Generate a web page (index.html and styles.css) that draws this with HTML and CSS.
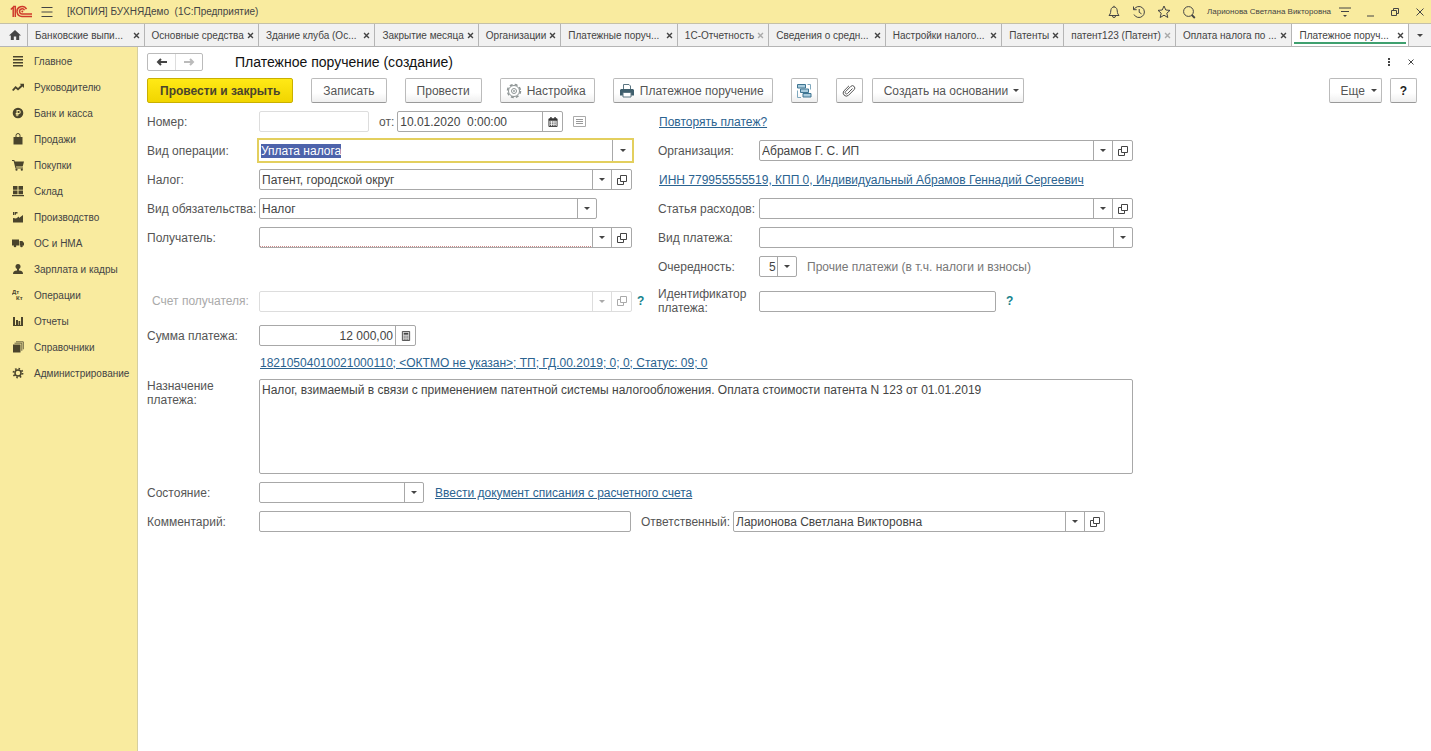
FILE: index.html
```html
<!DOCTYPE html>
<html lang="ru">
<head>
    <meta charset="UTF-8">
    <meta name="viewport" content="width=device-width, initial-scale=1.0">
    <title>Платежное поручение (создание)</title>
    <link rel="stylesheet" href="styles.css">
</head>
<body>
    <!-- shared icons -->
    <svg class="defs" width="0" height="0">
        <symbol id="open" viewBox="0 0 10 10">
            <path d="M3.5 .5h6v6h-6zM3.5 3.5h-3v6h6v-3" fill="none" stroke="currentColor"/>
        </symbol>
        <symbol id="cross" viewBox="0 0 8 8">
            <path d="M1.2 1.2l5.600 5.600M6.800 1.200L1.200 6.800" fill="none" stroke="currentColor" stroke-width="1.6"/>
        </symbol>
        <symbol id="arrow" viewBox="0 0 14 10">
            <path d="M12 5H3M6 2L3 5 6 8" fill="none" stroke="currentColor" stroke-width="2"/>
        </symbol>
    </svg>

    <header class="titlebar">
        <svg class="logo" viewBox="0 0 22 14">
            <g fill="none" stroke="#cf3a2b" stroke-width="1.500">
                <path d="M.8 4.500L3.200 2.300V12M5.300 12V1.500H3.200"/>
                <path d="M16.500 4.200A5 5 0 1 0 12.300 11.500H22"/>
                <path d="M14.500 5.300A2.600 2.600 0 1 0 12.300 9H22"/>
            </g>
            <circle cx="12.300" cy="6.600" r="1" fill="#cf3a2b"/>
        </svg>
        <button class="icon-btn menu-btn" aria-label="Меню">
            <svg viewBox="0 0 14 14"><path d="M1.500 2.500h11M1.500 7h11M1.500 11.500h11"/></svg>
        </button>
        <span class="app-name">[КОПИЯ] БУХНЯДемо&nbsp; (1С:Предприятие)</span>
        <div class="title-tools">
            <button class="icon-btn" aria-label="Уведомления">
                <svg viewBox="0 0 14 14"><path d="M2 10.500c2-2 1.500-4 2-6 .4-1.600 1.500-2.500 3-2.500s2.600.9 3 2.500c.5 2 0 4 2 6zM5.500 11a1.500 1.500 0 0 0 3 0M7 .8V2"/></svg>
            </button>
            <button class="icon-btn" aria-label="История">
                <svg viewBox="0 0 14 14"><path d="M2 4.500A5.500 5.500 0 1 1 2 9.500M1.500 1.500v3.200h3.200M7.200 4v3.300l2.300 1.500"/></svg>
            </button>
            <button class="icon-btn" aria-label="Избранное">
                <svg viewBox="0 0 14 14"><path d="M7 1l1.800 4 4.200.4-3.200 2.800 1 4.300L7 10.200l-3.800 2.300 1-4.300L1 5.400 5.200 5z"/></svg>
            </button>
            <button class="icon-btn" aria-label="Поиск">
                <svg viewBox="0 0 14 14"><circle cx="6.500" cy="6.500" r="4.900"/><path d="M9.800 10l3 3" stroke-width="1.800"/></svg>
            </button>
            <a class="user" href="#">Ларионова Светлана Викторовна</a>
            <button class="icon-btn" aria-label="Настройки окна">
                <svg viewBox="0 0 14 14"><path d="M1 3h12M3 6.500h8"/><path d="M5 10h4l-2 2z" fill="currentColor" stroke="none"/></svg>
            </button>
            <button class="icon-btn" aria-label="Свернуть">
                <svg viewBox="0 0 14 14"><path d="M4 11h7"/></svg>
            </button>
            <button class="icon-btn" aria-label="Развернуть">
                <svg viewBox="0 0 14 14"><path d="M3.500 5.500h5v5h-5zM5.500 5.500v-2h5v5h-2"/></svg>
            </button>
            <button class="icon-btn" aria-label="Закрыть окно">
                <svg viewBox="0 0 14 14"><path d="M3.500 3.500l7 7M10.500 3.500l-7 7"/></svg>
            </button>
        </div>
    </header>

    <nav class="tabs">
        <a class="tab home" href="#" aria-label="Начальная страница">
            <svg viewBox="0 0 12 12"><path d="M6 1L0 6.500h1.800V11h3V7.500h2.400V11h3V6.500H12z" fill="#444"/></svg>
        </a>
        <a class="tab wide" href="#"><span>Банковские выпи...</span><svg class="x"><use href="#cross"/></svg></a>
        <a class="tab" href="#"><span>Основные средства</span><svg class="x"><use href="#cross"/></svg></a>
        <a class="tab wide" href="#"><span>Здание клуба (Ос...</span><svg class="x"><use href="#cross"/></svg></a>
        <a class="tab" href="#"><span>Закрытие месяца</span><svg class="x"><use href="#cross"/></svg></a>
        <a class="tab" href="#"><span>Организации</span><svg class="x"><use href="#cross"/></svg></a>
        <a class="tab wide" href="#"><span>Платежные поруч...</span><svg class="x"><use href="#cross"/></svg></a>
        <a class="tab" href="#"><span>1С-Отчетность</span><svg class="x pale"><use href="#cross"/></svg></a>
        <a class="tab wide" href="#"><span>Сведения о средн...</span><svg class="x"><use href="#cross"/></svg></a>
        <a class="tab wide" href="#"><span>Настройки налого...</span><svg class="x"><use href="#cross"/></svg></a>
        <a class="tab" href="#"><span>Патенты</span><svg class="x"><use href="#cross"/></svg></a>
        <a class="tab" href="#"><span>патент123 (Патент)</span><svg class="x pale"><use href="#cross"/></svg></a>
        <a class="tab wide" href="#"><span>Оплата налога по ...</span><svg class="x"><use href="#cross"/></svg></a>
        <a class="tab wide active" href="#"><span>Платежное поруч...</span><svg class="x"><use href="#cross"/></svg></a>
        <button class="tab-more" aria-label="Все вкладки"><i class="caret"></i></button>
    </nav>

    <div class="main">
        <aside class="sidebar">
            <a href="#"><svg viewBox="0 0 12 12"><path d="M1 1h10v1.500H1zM1 4h10v1.500H1zM1 7h10v1.500H1zM1 10h10v1.500H1z"/></svg>Главное</a>
            <a href="#"><svg viewBox="0 0 12 12"><path d="M0 9l3.500-4 2.500 2 3-3-1.300-1.300H12V7l-1.500-1.500L6 9.500 3.700 7.500 1.500 10z"/></svg>Руководителю</a>
            <a href="#"><svg viewBox="0 0 12 12"><path fill-rule="evenodd" d="M6 .7a5.300 5.300 0 1 0 0 10.600A5.300 5.300 0 0 0 6 .7zM4.500 3h2.300a1.900 1.900 0 0 1 0 3.900H5.600v.6H7v.8H5.600v1H4.500v-1h-.8v-.8h.8v-.6h-.8V6h.8zm1.100 1v2h1.200a1 1 0 0 0 0-2z"/></svg>Банк и касса</a>
            <a href="#"><svg viewBox="0 0 12 12"><path d="M1.500 4h9v7.500h-9z"/><path d="M4 6V2.500a2 2 0 0 1 4 0V6" fill="none" stroke="#4a442c"/></svg>Продажи</a>
            <a href="#"><svg viewBox="0 0 12 12"><path d="M0 1h2.300l.5 1.500H12L10.700 7.500H4l.3 1H11v1H3.500L1.600 2H0z"/><circle cx="4.500" cy="10.700" r="1.100"/><circle cx="9.800" cy="10.700" r="1.100"/></svg>Покупки</a>
            <a href="#"><svg viewBox="0 0 12 12"><path d="M1 1h4.500v3.800H1zM6.500 1H11v3.800H6.500zM1 5.600h4.500v3.600H1zM6.500 5.600H11v3.600H6.500zM0 10h12v1.300H0z"/></svg>Склад</a>
            <a href="#"><svg viewBox="0 0 12 12"><path d="M1 11.500V7l3 .5L7 5.500V7l4-3v7.500zM1 1h1.500v3H1zM3 1h2.500v1.500H4v1.200H3z"/></svg>Производство</a>
            <a href="#"><svg viewBox="0 0 12 12"><path d="M0 2.500h7v6H0zM7.600 4h2.700L12 6v2.500H7.600z"/><circle cx="3" cy="9" r="1.300"/><circle cx="9.500" cy="9" r="1.300"/></svg>ОС и НМА</a>
            <a href="#"><svg viewBox="0 0 12 12"><circle cx="6" cy="3.500" r="2.500"/><path d="M5 5h2v2.500c3 .3 4 1.300 4 3.500H1c0-2.200 1-3.200 4-3.500z"/></svg>Зарплата и кадры</a>
            <a href="#"><svg viewBox="0 0 12 12"><g class="dtkt"><text x="0" y="5">Дт</text><text x="4" y="11">Кт</text></g></svg>Операции</a>
            <a href="#"><svg viewBox="0 0 12 12"><path d="M1 2h2v8H1zM4 5h2v5H4zM6.500 6h1.700v4H6.500zM9 2h2v8H9zM1 10h10v1H1z"/></svg>Отчеты</a>
            <a href="#"><svg viewBox="0 0 12 12"><path d="M1 3.500h7.500v8H1z"/><path d="M2.500 2.200h7.300v7.600M4 .8h7.300v7.500" fill="none" stroke="#4a442c" stroke-width=".8"/></svg>Справочники</a>
            <a href="#"><svg viewBox="0 0 12 12"><g fill="none" stroke="#4a442c"><circle cx="6" cy="6" r="3" stroke-width="1.500"/><circle cx="6" cy="6" r="4.500" stroke-width="1.800" stroke-dasharray="1.530 2" /></g></svg>Администрирование</a>
        </aside>

        <main class="content">
            <div class="page-head">
                <div class="history">
                    <button aria-label="Назад"><svg><use href="#arrow"/></svg></button>
                    <button class="forward" aria-label="Вперед"><svg><use href="#arrow"/></svg></button>
                </div>
                <h1>Платежное поручение (создание)</h1>
                <button class="icon-btn small" aria-label="Дополнительно">
                    <svg viewBox="0 0 8 8"><path d="M3 0h2v2H3zM3 3h2v2H3zM3 6h2v2H3z" fill="currentColor" stroke="none"/></svg>
                </button>
                <button class="icon-btn small" aria-label="Закрыть">
                    <svg viewBox="0 0 8 8"><path d="M1.500 1.500l5 5M6.500 1.500l-5 5"/></svg>
                </button>
            </div>

            <div class="toolbar">
                <button class="btn primary">Провести и закрыть</button>
                <button class="btn">Записать</button>
                <button class="btn">Провести</button>
                <button class="btn with-icon">
                    <svg viewBox="0 0 16 16"><g fill="none" stroke="#8d9494"><circle cx="8" cy="8" r="5.500"/><circle cx="8" cy="8" r="6.500" stroke-width="1.500" stroke-dasharray="2.900 2.200"/><circle cx="8" cy="8" r="2.500"/><circle cx="8" cy="8" r=".6"/></g></svg>
                    Настройка
                </button>
                <button class="btn with-icon">
                    <svg viewBox="0 0 16 16"><path d="M4.500 6V1.500h5.500l1.500 1.500V6" fill="#fff" stroke="#5c7682"/><path d="M2 6h12l1 1v5.500H1V7z" fill="#3f5f6d"/><path d="M4 9.500h8v4.500H4z" fill="#fff" stroke="#5c7682"/></svg>
                    Платежное поручение
                </button>
                <button class="btn square" aria-label="Структура подчиненности">
                    <svg viewBox="0 0 16 16"><g fill="#a9cbdc" stroke="#3e7592"><path d="M1.500 1.500h8v3.500h-8zM4.500 6h8v3.500h-8zM7 10.500h8V14H7z"/><path d="M1.500 7.500v7H5M11.500 1.500h3v5" fill="none" stroke="#7fa9bf"/></g></svg>
                </button>
                <button class="btn square" aria-label="Присоединенные файлы">
                    <svg viewBox="0 0 16 16"><path d="M11.500 5.500l-5 5a1.300 1.300 0 0 1-1.900-1.900l5.200-5.200a2.300 2.300 0 0 1 3.300 3.300l-5.700 5.700a3.200 3.200 0 0 1-4.500-4.500L8 2.800" fill="none" stroke="#555"/></svg>
                </button>
                <button class="btn create">Создать на основании <i class="caret"></i></button>
                <button class="btn more">Еще <i class="caret"></i></button>
                <button class="btn square help-btn">?</button>
            </div>

            <form class="form">
                <div class="left">
                    <label for="number">Номер:</label>
                    <div class="line">
                        <input class="field number" id="number" type="text" disabled>
                        <label for="date">от:</label>
                        <div class="field date">
                            <input id="date" type="text" value="10.01.2020  0:00:00">
                            <button type="button" aria-label="Календарь">
                                <svg viewBox="0 0 11 11"><path d="M1 2h9v8.500H1z" fill="none" stroke="#333"/><path d="M1 2h9v2H1zM2.500 0h1.500v2H2.500zM7 0h1.500v2H7z" fill="#333"/><path d="M2 5.500h7M2 7.500h7M2 9.300h7" stroke="#333" stroke-dasharray="1.500 1"/></svg>
                            </button>
                        </div>
                        <svg class="list-icon" viewBox="0 0 13 11"><path d="M.5 .5h12v10h-12z" fill="none" stroke="#aaa"/><path d="M3 3.500h7M3 5.500h7M3 7.500h7" stroke="#999"/></svg>
                    </div>
                </div>
                <div class="right"><a class="link" href="#">Повторять платеж?</a></div>

                <div class="left">
                    <label for="operation">Вид операции:</label>
                    <div class="field focused">
                        <input id="operation" type="text" role="combobox" aria-expanded="false" value="Уплата налога" autofocus>
                        <button type="button" aria-label="Выбрать"><i class="caret"></i></button>
                    </div>
                </div>
                <div class="right">
                    <label for="org">Организация:</label>
                    <div class="field">
                        <span class="select"><select id="org"><option>Абрамов Г. С. ИП</option></select></span>
                        <button type="button" aria-label="Открыть"><svg><use href="#open"/></svg></button>
                    </div>
                </div>

                <div class="left">
                    <label for="tax">Налог:</label>
                    <div class="field">
                        <span class="select"><select id="tax"><option>Патент, городской округ</option></select></span>
                        <button type="button" aria-label="Открыть"><svg><use href="#open"/></svg></button>
                    </div>
                </div>
                <div class="right"><a class="link" href="#">ИНН 779955555519, КПП 0, Индивидуальный Абрамов Геннадий Сергеевич</a></div>

                <div class="left">
                    <label for="duty">Вид обязательства:</label>
                    <div class="field duty">
                        <span class="select"><select id="duty"><option>Налог</option></select></span>
                    </div>
                </div>
                <div class="right">
                    <label for="expense">Статья расходов:</label>
                    <div class="field">
                        <span class="select"><select id="expense"><option></option></select></span>
                        <button type="button" aria-label="Открыть"><svg><use href="#open"/></svg></button>
                    </div>
                </div>

                <div class="left">
                    <label for="payee">Получатель:</label>
                    <div class="field">
                        <span class="select"><select class="required" id="payee"><option></option></select></span>
                        <button type="button" aria-label="Открыть"><svg><use href="#open"/></svg></button>
                    </div>
                </div>
                <div class="right">
                    <label for="kind">Вид платежа:</label>
                    <div class="field">
                        <span class="select"><select id="kind"><option></option></select></span>
                    </div>
                </div>

                <div class="left"></div>
                <div class="right">
                    <label for="priority">Очередность:</label>
                    <div class="line">
                        <div class="field priority">
                            <span class="select"><select id="priority"><option>5</option></select></span>
                        </div>
                        <span class="hint">Прочие платежи (в т.ч. налоги и взносы)</span>
                    </div>
                </div>

                <div class="left tall disabled">
                    <label for="account">Счет получателя:</label>
                    <div class="field">
                        <span class="select"><select id="account" disabled><option></option></select></span>
                        <button type="button" aria-label="Открыть" disabled><svg><use href="#open"/></svg></button>
                    </div>
                    <a class="help" href="#">?</a>
                </div>
                <div class="right tall">
                    <label for="ident">Идентификатор платежа:</label>
                    <div class="line">
                        <input class="field ident" id="ident" type="text">
                        <a class="help" href="#">?</a>
                    </div>
                </div>

                <div class="left">
                    <label for="sum">Сумма платежа:</label>
                    <div class="field sum">
                        <input id="sum" type="text" value="12 000,00">
                        <button type="button" aria-label="Калькулятор">
                            <svg viewBox="0 0 11 11"><path d="M1.500 .5h8v10h-8z" fill="#ddd" stroke="#444"/><path d="M3 2h5v2H3z" fill="#444"/><path d="M3 5.700h5M3 7.500h5M3 9.200h5" stroke="#444" stroke-dasharray="1 1"/></svg>
                        </button>
                    </div>
                </div>
                <div class="right"></div>

                <div class="full kbk">
                    <a class="link" href="#">18210504010021000110; &lt;ОКТМО не указан&gt;; ТП; ГД.00.2019; 0; 0; Статус: 09; 0</a>
                </div>

                <div class="full purpose">
                    <label for="purpose">Назначение платежа:</label>
                    <textarea class="field" id="purpose">Налог, взимаемый в связи с применением патентной системы налогообложения. Оплата стоимости патента N 123 от 01.01.2019</textarea>
                </div>

                <div class="full">
                    <label for="state">Состояние:</label>
                    <div class="line">
                        <div class="field state">
                            <span class="select"><select id="state"><option></option></select></span>
                        </div>
                        <a class="link" href="#">Ввести документ списания с расчетного счета</a>
                    </div>
                </div>

                <div class="full">
                    <label for="comment">Комментарий:</label>
                    <div class="line last">
                        <input class="field" id="comment" type="text">
                        <label for="author">Ответственный:</label>
                        <div class="field">
                            <span class="select"><select id="author"><option>Ларионова Светлана Викторовна</option></select></span>
                            <button type="button" aria-label="Открыть"><svg><use href="#open"/></svg></button>
                        </div>
                    </div>
                </div>
            </form>
        </main>
    </div>

    <script>
        const operation = document.getElementById('operation');
        operation.focus();
        operation.select();
    </script>
</body>
</html>
```
FILE: styles.css
```css
* {
    box-sizing: border-box;
}

body {
    margin: 0;
    min-height: 100vh;
    display: flex;
    flex-direction: column;
    font-family: "Liberation Sans", Arial, sans-serif;
    font-size: 12px;
    color: #444;
    background: #fff;
}

button, input, select, textarea {
    font: inherit;
    color: inherit;
    margin: 0;
    padding: 0;
    border: none;
    background: none;
    outline: none;
}

button {
    cursor: pointer;
}

a {
    color: inherit;
    text-decoration: none;
}

svg {
    flex: none;
}

.defs {
    position: absolute;
}

.caret {
    display: inline-block;
    border: 3px solid transparent;
    border-top-color: #444;
    border-bottom: none;
}

/* title bar */
.titlebar {
    display: flex;
    align-items: center;
    height: 23px;
    padding: 0 4px 0 10px;
    background: #f9eb9f;
    font-size: 10px;
}

.logo {
    width: 22px;
    height: 14px;
}

.icon-btn {
    display: flex;
}

.icon-btn svg {
    width: 14px;
    height: 14px;
    fill: none;
    stroke: currentColor;
}

.menu-btn {
    margin: 0 13px 0 8px;
}

.title-tools {
    display: flex;
    align-items: center;
    gap: 11px;
    margin-left: auto;
}

.user {
    font-size: 8px;
    margin-right: -4px;
}

/* tabs */
.tabs {
    display: flex;
    height: 24px;
    background: #f1f1f1;
    border-top: 1px solid #c4c0a8;
    border-bottom: 1px solid #b5b5b5;
    font-size: 10px;
}

.tab {
    display: flex;
    align-items: center;
    justify-content: space-between;
    gap: 3px;
    padding: 0 4px 0 7px;
    border-right: 1px solid #b5b5b5;
    white-space: nowrap;
}

.home {
    flex: none;
    width: 28px;
    justify-content: center;
}

.home svg {
    width: 12px;
    height: 12px;
}

.wide {
    width: 117px;
}

.active {
    background: linear-gradient(#3fa06f, #3fa06f) center bottom 2px / calc(100% - 4px) 2px no-repeat #fff;
}

.tab .x {
    width: 7px;
    height: 7px;
}

.pale {
    color: #aaa;
}

.tab-more {
    flex: none;
    width: 22px;
    display: flex;
    align-items: center;
    justify-content: center;
}

/* sidebar */
.main {
    flex: 1;
    display: flex;
}

.sidebar {
    width: 138px;
    flex: none;
    padding-top: 1px;
    background: #f9eb9f;
    border-right: 1px solid #d6cf9f;
    font-size: 10px;
}

.sidebar a {
    display: flex;
    align-items: center;
    gap: 10px;
    height: 26px;
    padding-left: 12px;
}

.sidebar svg {
    width: 12px;
    height: 12px;
    fill: #4a442c;
}

.dtkt {
    font-size: 6px;
    font-weight: bold;
}

/* page */
.content {
    flex: 1;
    min-width: 0;
    padding: 6px 14px 20px 9px;
}

.page-head {
    display: flex;
    align-items: center;
    height: 18px;
    margin-bottom: 7px;
    padding-right: 2px;
}

.history {
    display: flex;
    height: 18px;
    border: 1px solid #bbb;
    border-radius: 2px;
}

.history button {
    width: 27px;
    display: flex;
    align-items: center;
    justify-content: center;
}

.history svg {
    width: 14px;
    height: 10px;
}

.history .forward {
    color: #bbb;
    border-left: 1px solid #ddd;
}

.forward svg {
    transform: scaleX(-1);
}

h1 {
    flex: 1;
    margin: 0 0 0 32px;
    font-size: 14px;
    font-weight: normal;
    color: #111;
}

.small {
    margin-left: 14px;
}

.small svg {
    width: 8px;
    height: 8px;
}

.toolbar {
    display: flex;
    gap: 18px;
    margin-bottom: 8px;
}

.btn {
    display: flex;
    align-items: center;
    justify-content: center;
    height: 25px;
    padding: 0 11px;
    border: 1px solid #bbb;
    border-bottom-color: #999;
    border-radius: 2px;
    background: linear-gradient(#fff 60%, #efefef);
    color: #555;
    white-space: nowrap;
}

.primary {
    padding: 0 12px;
    font-weight: bold;
    color: #4a442c;
    border-color: #c9b000;
    background: linear-gradient(#ffe916, #f1d500);
}

.with-icon {
    gap: 5px;
    padding: 0 8px 0 5px;
}

.btn svg {
    width: 16px;
    height: 16px;
}

.square {
    width: 27px;
    padding: 0;
}

.create {
    gap: 5px;
    margin-left: -9px;
    padding-right: 4px;
}

.more {
    gap: 6px;
    margin-left: auto;
    padding-right: 4px;
}

.help-btn {
    margin-left: -10px;
    font-weight: bold;
    color: #222;
}

/* form */
.form {
    max-width: 986px;
    display: grid;
    grid-template-columns: 511fr 475fr;
    row-gap: 8px;
    line-height: 14px;
}

.left, .right, .full {
    display: grid;
    align-items: center;
    min-height: 21px;
}

.left {
    grid-template-columns: 112px 1fr 26px;
}

.right {
    grid-template-columns: 101px 1fr;
}

.full {
    grid-column: 1 / 3;
    grid-template-columns: 112px 1fr;
}

.tall {
    min-height: 32px;
}

.form label {
    color: #555;
}

.line {
    display: flex;
    align-items: center;
    gap: 10px;
}

.field {
    display: flex;
    width: 100%;
    height: 21px;
    border: 1px solid #a8a8a8;
    border-radius: 2px;
    background: #fff;
}

.field input {
    flex: 1;
    min-width: 0;
    padding: 0 2px;
    white-space: pre;
}

.field button {
    width: 20px;
    display: flex;
    align-items: center;
    justify-content: center;
    border-left: 1px solid #a8a8a8;
}

.field button svg {
    width: 10px;
    height: 10px;
}

.select {
    position: relative;
    flex: 1;
    display: flex;
    min-width: 0;
}

.select select {
    appearance: none;
    width: 100%;
    padding: 0 20px 0 2px;
}

.select::before {
    content: "";
    position: absolute;
    top: 0;
    bottom: 0;
    right: 18px;
    border-left: 1px solid #a8a8a8;
    pointer-events: none;
}

.select::after {
    content: "";
    position: absolute;
    top: 8px;
    right: 6px;
    border: 3px solid transparent;
    border-top-color: #444;
    border-bottom: none;
    pointer-events: none;
}

.select .required {
    margin-right: 19px;
    background: linear-gradient(90deg, #c88 50%, transparent 50%) 0 100% / 2px 1px repeat-x;
}

.focused {
    width: auto;
    height: 25px;
    margin: -2px;
    border: 2px solid #e3cf5e;
    border-radius: 0;
}

.focused ::selection {
    color: #fff;
    background: #4d63ab;
}

.number {
    width: 110px;
    border-color: #ddd;
}

.line label {
    white-space: nowrap;
}

.line label + .field {
    margin-left: -7px;
}

.date {
    width: 166px;
}

.list-icon {
    width: 13px;
    height: 11px;
}

.duty {
    width: 338px;
}

.priority {
    width: 38px;
}

.priority select {
    padding-left: 9px;
}

.hint {
    color: #777;
}

.disabled .field {
    color: #aaa;
}

.disabled label {
    padding-left: 5px;
    color: #aaa;
}

.disabled .field, .disabled .field button, .disabled .select::before {
    border-color: #ddd;
}

.disabled .select::after {
    border-top-color: #aaa;
}

.help {
    color: #16828c;
    font-weight: bold;
}

.left .help {
    padding-left: 5px;
}

.ident {
    width: 237px;
}

.sum {
    width: 157px;
}

.sum input {
    text-align: right;
}

.link {
    grid-column: 1 / 3;
    justify-self: start;
    padding-left: 1px;
    color: #2b6390;
    text-decoration: underline;
}

.kbk {
    min-height: 17px;
}

.kbk .link {
    grid-column: 2;
}

.purpose {
    align-items: start;
}

.purpose .field {
    height: 95px;
    padding: 3px 2px;
    resize: none;
}

.state {
    width: 165px;
}

.last {
    padding-right: 28px;
}

.last .field {
    flex: 1;
    min-width: 0;
}
```
